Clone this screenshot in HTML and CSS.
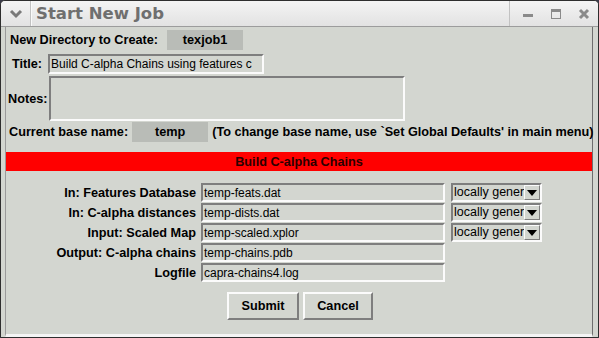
FILE: index.html
```html
<!DOCTYPE html>
<html lang="en">
<head>
    <meta charset="UTF-8">
    <title>Start New Job</title>
    <link rel="stylesheet" href="styles.css">
</head>
<body>
    <div class="window">
        <div class="titlebar">
            <div class="menu-btn">
                <svg width="14" height="10" viewBox="0 0 14 10"><path d="M2 2 L7 7 L12 2" fill="none" stroke="#7a7a7a" stroke-width="3"/></svg>
            </div>
            <div class="win-title">Start New Job</div>
            <div class="win-controls">
                <svg width="12" height="12" viewBox="0 0 12 12"><rect x="1" y="6" width="10" height="3" fill="#8a8a8a"/></svg>
                <svg width="12" height="12" viewBox="0 0 12 12"><rect x="1.5" y="1.5" width="9" height="9" fill="none" stroke="#8a8a8a"/><rect x="1" y="1" width="10" height="3" fill="#8a8a8a"/></svg>
                <svg width="12" height="12" viewBox="0 0 12 12"><path d="M2 2 L10 10 M10 2 L2 10" stroke="#8a8a8a" stroke-width="3"/></svg>
            </div>
        </div>

        <div class="content">
            <div class="row row-dir">
                <span class="lbl">New Directory to Create:</span>
                <span class="tag tag-dir">texjob1</span>
            </div>
            <div class="row row-title">
                <span class="lbl">Title:</span>
                <span class="entry entry-title">Build C-alpha Chains using features c</span>
            </div>
            <div class="row row-notes">
                <span class="lbl">Notes:</span>
                <span class="entry notes"></span>
            </div>
            <div class="row row-base">
                <span class="lbl">Current base name:</span>
                <span class="tag tag-base">temp</span>
                <span class="lbl hint">(To change base name, use `Set Global Defaults' in main menu)</span>
            </div>

            <div class="banner">Build C-alpha Chains</div>

            <div class="form">
                <span class="flbl">In: Features Database</span>
                <span class="entry fentry">temp-feats.dat</span>
                <span class="select"><span class="sel-text">locally gener</span><span class="sel-arrow"></span></span>

                <span class="flbl">In: C-alpha distances</span>
                <span class="entry fentry">temp-dists.dat</span>
                <span class="select"><span class="sel-text">locally gener</span><span class="sel-arrow"></span></span>

                <span class="flbl">Input: Scaled Map</span>
                <span class="entry fentry">temp-scaled.xplor</span>
                <span class="select"><span class="sel-text">locally gener</span><span class="sel-arrow"></span></span>

                <span class="flbl">Output: C-alpha chains</span>
                <span class="entry fentry">temp-chains.pdb</span>
                <span></span>

                <span class="flbl">Logfile</span>
                <span class="entry fentry">capra-chains4.log</span>
                <span></span>
            </div>

            <div class="buttons">
                <button class="btn btn-submit">Submit</button>
                <button class="btn btn-cancel">Cancel</button>
            </div>
        </div>
    </div>
</body>
</html>
```

FILE: styles.css
```css
body { margin: 0; background: #3a3a48; font-family: "Liberation Sans", Arial, sans-serif; font-size: 12px; }
.window { width: 599px; height: 338px; box-sizing: border-box; background: #d3d6d0; border: 1px solid #2e2e2e; border-radius: 5px 5px 0 0; overflow: hidden; display: flex; flex-direction: column; }

.titlebar { height: 25px; display: flex; align-items: center; background: linear-gradient(#f4f4f4, #e2e2e2); border-bottom: 1px solid #9c9c9c; }
.menu-btn { width: 29px; height: 25px; display: flex; align-items: center; justify-content: center; border-right: 1px solid #c2c2c2; box-shadow: 1px 0 0 #fafafa; }
.win-title { flex: 1; padding-left: 5px; font-family: "DejaVu Sans", sans-serif; font-weight: bold; font-size: 16.5px; color: #6f6f6f; }
.win-controls { width: 84px; height: 25px; display: flex; align-items: center; justify-content: space-around; padding-left: 4px; border-left: 1px solid #c2c2c2; }

.content { flex: 1; margin: 0 5px 0 4px; border-left: 1px solid #9a9a9a; border-right: 1px solid #6e6e6e; border-bottom: 3px solid #f4f4f4; padding: 3px 0 0 0; display: flex; flex-direction: column; }

.row { display: flex; align-items: center; white-space: nowrap; }
.row > * { flex-shrink: 0; }
.lbl { font-weight: bold; font-size: 12.7px; color: #000; }
.row-dir { height: 20px; padding-left: 4px; }
.row-title { height: 20px; margin-top: 4px; padding-left: 6px; }
.row-notes { height: 45px; margin-top: 2px; padding-left: 2px; }
.row-base { height: 20px; margin-top: 1px; padding-left: 3px; }

.tag { background: #b9bcb7; height: 20px; display: flex; align-items: center; justify-content: center; font-weight: bold; font-size: 12.7px; }
.tag-dir { width: 76px; margin-left: 9px; }
.tag-base { width: 76px; margin-left: 4px; }
.hint { margin-left: 4px; }

.entry { box-sizing: border-box; border: 2px solid; border-color: #7e7e7e #fbfbfb #fbfbfb #7e7e7e; background: #d3d6d0; white-space: nowrap; overflow: hidden; padding-left: 1px; display: flex; align-items: center; }
.entry-title { width: 216px; height: 20px; margin-left: 6px; }
.notes { width: 356px; height: 45px; margin-left: 2px; }

.banner { margin-top: 10px; height: 19px; background: #ff0000; color: #2a0000; font-weight: bold; font-size: 12.7px; display: flex; align-items: center; justify-content: center; }

.form { margin-top: 12px; display: grid; grid-template-columns: 190px 244px 92px; grid-auto-rows: 19px; row-gap: 1px; column-gap: 5px; }
.flbl { font-weight: bold; font-size: 12.7px; text-align: right; align-self: center; }
.fentry { height: 19px; }
.select { box-sizing: border-box; height: 19px; margin-left: 1px; display: flex; border: 2px solid; border-color: #7e7e7e #fbfbfb #fbfbfb #7e7e7e; font-size: 12.5px; }
.sel-text { flex: 1; white-space: nowrap; padding-left: 1px; line-height: 15px; }
.sel-arrow { width: 16px; box-sizing: border-box; border: 1px solid; border-color: #fbfbfb #7e7e7e #7e7e7e #fbfbfb; display: flex; align-items: center; justify-content: center; }
.sel-arrow::after { content: ""; border-left: 5px solid transparent; border-right: 5px solid transparent; border-top: 6px solid #000; }

.buttons { margin-top: 10px; display: flex; justify-content: center; gap: 4px; padding-left: 2px; }
.btn { height: 28px; box-sizing: border-box; background: #d3d6d0; border: 2px solid; border-color: #fbfbfb #7e7e7e #7e7e7e #fbfbfb; font-family: "Liberation Sans", Arial, sans-serif; font-weight: bold; font-size: 12.7px; color: #000; padding: 0; }
.btn-submit { width: 72px; }
.btn-cancel { width: 70px; }
```
